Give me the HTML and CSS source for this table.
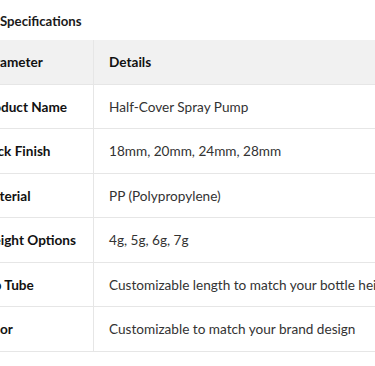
FILE: index.html
```html
<!DOCTYPE html>
<html>
<head>
<meta charset="utf-8">
<link rel="stylesheet" href="styles.css">
</head>
<body>
<div class="page">
  <h3 class="title">Specifications</h3>
  <table class="spec">
    <thead>
      <tr><th class="param">Parameter</th><th class="details">Details</th></tr>
    </thead>
    <tbody>
      <tr><td class="param">Product Name</td><td>Half-Cover Spray Pump</td></tr>
      <tr><td class="param">Neck Finish</td><td>18mm, 20mm, 24mm, 28mm</td></tr>
      <tr><td class="param">Material</td><td>PP (Polypropylene)</td></tr>
      <tr><td class="param">Weight Options</td><td>4g, 5g, 6g, 7g</td></tr>
      <tr><td class="param">Dip Tube</td><td>Customizable length to match your bottle height</td></tr>
      <tr><td class="param">Color</td><td>Customizable to match your brand design</td></tr>
    </tbody>
  </table>
</div>
</body>
</html>
```
FILE: styles.css
```css
html, body {
  margin: 0;
  padding: 0;
  background: #ffffff;
  overflow: hidden;
}
body {
  font-family: Lato, "Open Sans", "Liberation Sans", sans-serif;
  color: #333333;
}
.page {
  margin-left: -35px;
  width: 480px;
}
.title {
  margin: 0;
  padding: 11px 0 0 35px;
  height: 30px;
  box-sizing: border-box;
  font-size: 13.2px;
  font-weight: 700;
  color: #1a1a1a;
  line-height: 20px;
}
.spec {
  border-collapse: collapse;
  width: 480px;
  font-size: 13.6px;
  margin-top: 10px;
}
.spec th, .spec td {
  text-align: left;
  padding: 13px 15px 11px 15px;
  line-height: 19.5px;
  border-bottom: 1px solid #e6e6e6;
  white-space: nowrap;
}
.spec thead th {
  background: #f1f1f1;
  font-weight: 700;
  color: #111111;
}
.spec .param {
  width: 98px;
  border-right: 1px solid #e6e6e6;
  font-weight: 700;
  color: #111111;
}
.spec td {
  color: #333333;
}
```
